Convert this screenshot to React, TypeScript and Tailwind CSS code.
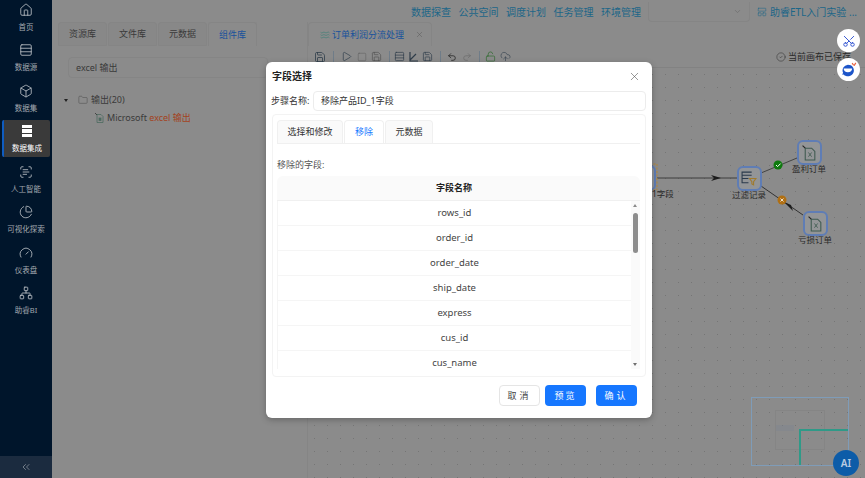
import {
  Box,
  ChartPie,
  ChevronDown,
  ChevronsLeft,
  CircleCheck,
  CloudUpload,
  Folder,
  Gauge,
  House,
  LayoutPanelTop,
  LockOpen,
  Network,
  Play,
  Redo2,
  Rows3,
  Save,
  ScanText,
  Scissors,
  Square,
  Undo2,
  Waves,
  X,
} from "lucide-react";

const FONT = "font-['Noto_Sans','Noto_Sans_CJK_SC',sans-serif]";

const navItems = [
  { label: "首页", icon: House },
  { label: "数据源", icon: Rows3 },
  { label: "数据集", icon: Box },
  { label: "数据集成", icon: null, active: true },
  { label: "人工智能", icon: ScanText },
  { label: "可视化探索", icon: ChartPie },
  { label: "仪表盘", icon: Gauge },
  { label: "助睿BI", icon: Network },
];

const fields = ["rows_id", "order_id", "order_date", "ship_date", "express", "cus_id", "cus_name"];

function Sidebar() {
  return (
    <aside className="flex w-[52px] shrink-0 flex-col bg-[#00152b]">
      <nav className="-mt-[1.5px] flex flex-1 flex-col items-center gap-[3.5px] overflow-hidden">
        {navItems.map((item) => {
          const Icon = item.icon;
          return (
            <div
              key={item.label}
              className={`flex h-[37px] w-[48px] shrink-0 flex-col items-center rounded-[2px] pt-[4px] ${
                item.active ? "border-l-2 border-[#0f5cc0] bg-[#3a3a3a] text-white" : "text-[#a3a9b0]"
              }`}
            >
              {Icon ? (
                <Icon size={14} strokeWidth={1.4} className="text-[#c2c6cb]" />
              ) : (
                <div className="flex h-[14px] w-[10px] flex-col justify-center gap-[1px]">
                  <div className="h-[3.5px] bg-white" />
                  <div className="h-[3.5px] bg-white" />
                  <div className="h-[3.5px] bg-white" />
                </div>
              )}
              <span className="mt-[5px] whitespace-nowrap text-[7.5px] leading-[10px]">{item.label}</span>
            </div>
          );
        })}
      </nav>
      <div className="flex h-[22px] items-center justify-center bg-[#1b2b3f] text-[#a3a9b0]">
        <ChevronsLeft size={12} strokeWidth={1.3} />
      </div>
    </aside>
  );
}

function TopBar() {
  return (
    <header className="flex h-[22px] items-center justify-end pr-[4px] pt-[2px] text-[10px] text-[#1c6688]">
      <div className="flex gap-[7.5px]">
        <span>数据探查</span>
        <span>公共空间</span>
        <span>调度计划</span>
        <span>任务管理</span>
        <span>环境管理</span>
      </div>
      <div className="ml-[7px] flex h-[20px] w-[102px] items-center justify-end rounded-b-[4px] border border-t-0 border-[#858585] pr-[7px] text-[#6f6f6f]">
        <ChevronDown size={9} />
      </div>
      <div className="flex h-[20px] w-[111px] items-center gap-[3px] pl-[7px]">
        <LayoutPanelTop size={10} strokeWidth={1.3} />
        <span className="whitespace-nowrap">助睿ETL入门实验 ...</span>
      </div>
    </header>
  );
}

function LeftPanel() {
  return (
    <section className="flex w-[256px] shrink-0 flex-col border-r border-[#858585] pl-[6px] text-[#3a3a3a]">
      <div className="flex h-[24px] gap-[1px] text-[9px]">
        {["资源库", "文件库", "元数据"].map((t) => (
          <div
            key={t}
            className="flex w-[49px] items-center justify-center rounded-t-[3px] border border-[#858585] bg-[#888888]"
          >
            {t}
          </div>
        ))}
        <div className="flex w-[49px] items-center justify-center rounded-t-[3px] border border-b-0 border-[#858585] text-[#17529c]">
          组件库
        </div>
      </div>
      <div className="ml-[10px] mt-[11px] flex h-[21px] w-[200px] items-center rounded-[4px] border border-[#858585] px-[7px] text-[9px]">
        excel 输出
      </div>
      <div className="ml-[6px] mt-[15px] flex h-[14px] items-center text-[9px]">
        <span className="h-0 w-0 border-x-[2.5px] border-t-[3px] border-x-transparent border-t-[#222222]" />
        <Folder size={10} strokeWidth={1.1} className="ml-[10px] text-[#444444]" />
        <span className="ml-[3px]">输出(20)</span>
      </div>
      <div className="ml-[37px] mt-[4px] flex h-[14px] items-center text-[9px]">
        <svg width="9" height="10" viewBox="0 0 9 10" fill="none" stroke="#4d6b60" strokeWidth="0.8">
          <path d="M2 1.5h4l2 2v6H2z" />
          <rect x="4" y="5" width="2" height="2.5" fill="#4d6b60" />
          <path d="M0 0l2 2" stroke="#333333" />
        </svg>
        <span className="ml-[3px] whitespace-nowrap">
          Microsoft <span className="text-[#a3431d]">excel 输出</span>
        </span>
      </div>
    </section>
  );
}

function Toolbar() {
  const cls = "text-[#2f3d4a]";
  const sep = "h-[11px] w-px bg-[#6f7c88]";
  return (
    <div className="flex h-[22px] items-center border-b border-[#828282] pl-[6px] pr-[14px]">
      <Save size={12} strokeWidth={1.6} className={cls} />
      <span className={`ml-[7px] ${sep}`} />
      <Play size={11} strokeWidth={1.5} className={`ml-[7px] ${cls}`} />
      <Square size={10} strokeWidth={1.2} className="ml-[5px] text-[#5d5d5d]" />
      <Save size={11} strokeWidth={1.3} className="ml-[4px] text-[#4a4a4a]" />
      <span className={`ml-[7px] ${sep}`} />
      <Rows3 size={11} strokeWidth={1.5} className={`ml-[4px] ${cls}`} />
      <svg width="10" height="11" viewBox="0 0 10 11" fill="none" stroke="#2f3d4a" strokeWidth="1.2" className="ml-[4px]">
        <path d="M1 1v9h8M1 9l6-6" />
      </svg>
      <Save size={11} strokeWidth={1.5} className={`ml-[3px] ${cls}`} />
      <span className={`ml-[7px] ${sep}`} />
      <Undo2 size={10} strokeWidth={1.8} className="ml-[6px] text-[#222222]" />
      <Redo2 size={10} strokeWidth={1.4} className="ml-[5px] text-[#666666]" />
      <span className={`ml-[7px] ${sep}`} />
      <LockOpen size={11} strokeWidth={1.5} className="ml-[5px] text-[#2e6b2e]" />
      <CloudUpload size={11} strokeWidth={1.3} className={`ml-[4px] ${cls}`} />
      <div className="ml-auto flex items-center gap-[2px] whitespace-nowrap pt-[1px] text-[9px] text-[#2a2a2a]">
        <CircleCheck size={10} strokeWidth={1.2} />
        当前画布已保存
      </div>
    </div>
  );
}

function FlowNode({ x, y, label, filter }: { x: number; y: number; label: string; filter?: boolean }) {
  return (
    <div className="absolute flex w-[50px] flex-col items-center" style={{ left: x - 13, top: y }}>
      <div className="flex h-[25px] w-[25px] items-center justify-center rounded-[6px] border-2 border-[#5f7db5] bg-[#939597]">
        {filter ? (
          <svg width="16" height="15" viewBox="0 0 15 14" fill="none" stroke="#2b3a4c" strokeWidth="1">
            <path d="M10 1H1v10h6M1 4h9M1 7h6" />
            <path d="M8 7h6l-2.2 3v3l-1.6-1v-2z" stroke="#a07a2c" />
          </svg>
        ) : (
          <svg width="15" height="16" viewBox="0 0 14 15" fill="none" stroke="#3f5a50" strokeWidth="1">
            <path d="M3 3h6l3 3v8H3z" />
            <path d="M0.5 0.5L3 3" stroke="#222222" />
            <path d="M6 7l3 4M9 7l-3 4" strokeWidth="0.8" />
          </svg>
        )}
      </div>
      <span className="mt-[-2px] whitespace-nowrap text-[8.5px] leading-[11px] text-[#2a2a2a]">{label}</span>
    </div>
  );
}

function Canvas() {
  return (
    <section className="flex min-w-0 flex-1 flex-col">
      <div className="flex h-[24px] items-end">
        <div className="flex h-[24px] w-[124px] items-center rounded-t-[4px] border border-b-0 border-[#858585] pl-[11px] text-[9px] text-[#17529c]">
          <Waves size={10} strokeWidth={1.3} className="mr-[2px] text-[#2d7d72]" />
          <span className="whitespace-nowrap">订单利润分流处理</span>
          <X size={9} strokeWidth={1.2} className="ml-[11px] text-[#555555]" />
        </div>
      </div>
      <Toolbar />
      <div className="relative flex-1 bg-[radial-gradient(circle,#757575_0.6px,transparent_0.9px)] bg-[length:13px_13px]">
        {/* 画布坐标 = 页面坐标 - (309, 68) */}
        <svg className="absolute inset-0 h-full w-full" fill="none">
          <path d="M349 110h80" stroke="#333333" strokeWidth="0.9" />
          <path d="M403 107l10 3-10 3 3-3z" fill="#1c1c1c" />
          <path d="M453 105l36-15" stroke="#444444" />
          <path d="M453 118l42 29" stroke="#333333" />
          <path d="M476 134l7 3 2 6z" fill="#1c1c1c" />
          <rect x="335" y="98" width="12" height="24" rx="5" stroke="#5f7db5" strokeWidth="2" fill="#939597" />
          <rect x="335" y="96" width="14" height="26" stroke="#b78735" strokeDasharray="2 1.5" />
          <circle cx="470" cy="97" r="4.5" fill="#0e7a0e" />
          <path d="M468 97l1.6 1.6 3-3" stroke="#ffffff" />
          <circle cx="474" cy="132" r="4.5" fill="#b06f12" />
          <path d="M472.5 130.5l3 3m0-3l-3 3" stroke="#ffffff" strokeWidth="0.8" />
        </svg>
        <span className="absolute left-[344px] top-[120px] whitespace-nowrap text-[8.5px] text-[#2a2a2a]">1字段</span>
        <FlowNode x={429} y={98} label="过滤记录" filter />
        <FlowNode x={489} y={72} label="盈利订单" />
        <FlowNode x={495} y={143} label="亏损订单" />

        {/* minimap */}
        <div className="absolute left-[443px] top-[329px] h-[69px] w-[98px] border border-[#7f9cb8]">
          <div className="absolute left-[23px] top-[12px] h-[40px] w-[50px] border border-[#858585]" />
          <div className="absolute left-[24px] top-[27px] h-[6px] w-[18px] bg-[#7d8490] opacity-40" />
          <div className="absolute left-[47px] bottom-0 top-[31px] w-[2px] bg-[#2f9a88]" />
          <div className="absolute left-[47px] right-0 top-[31px] h-[2px] bg-[#2f9a88]" />
        </div>
        <div className="absolute left-[524px] top-[382px] ml-[1px] flex h-[26px] w-[26px] items-center justify-center rounded-full bg-[#0d5ca8] text-[10px] font-semibold text-[#b9cde2]">
          AI
        </div>
      </div>
    </section>
  );
}

function FieldModal() {
  return (
    <div className="absolute left-[266px] top-[62px] flex h-[356px] w-[386px] flex-col rounded-[6px] bg-white text-[9px] text-[#333333] shadow-[0_2px_6px_rgba(0,0,0,0.25)]">
      <div className="flex h-[29px] items-center justify-between pl-[6px] pr-[11px]">
        <span className="text-[10px] font-semibold text-[#222222]">字段选择</span>
        <X size={13} strokeWidth={1.1} className="text-[#555555]" />
      </div>
      <div className="flex h-[20px] items-center pl-[5px] pr-[6px]">
        <span className="w-[42px] whitespace-nowrap">步骤名称:</span>
        <div className="flex h-[20px] flex-1 items-center rounded-[4px] border border-[#ececec] px-[7px]">
          移除产品ID_1字段
        </div>
      </div>
      <div className="ml-[6px] mr-[6px] mt-[3px] flex h-[263px] flex-col rounded-[4px] border border-[#f3f3f3] pl-[4px] pr-[5px] pt-[5px]">
        <div className="flex h-[24px] gap-[1px] border-b border-[#f0f0f0]">
          <div className="flex w-[66px] items-center justify-center rounded-t-[4px] border border-b-0 border-[#f0f0f0] bg-[#fafafa]">
            选择和修改
          </div>
          <div className="flex w-[40px] items-center justify-center rounded-t-[4px] border border-b-0 border-[#f0f0f0] text-[#1677ff]">
            移除
          </div>
          <div className="flex w-[48px] items-center justify-center rounded-t-[4px] border border-b-0 border-[#f0f0f0] bg-[#fafafa]">
            元数据
          </div>
        </div>
        <div className="mt-[14px] h-[14px] leading-[14px] text-[#555555]">移除的字段:</div>
        <div className="mt-[4px] w-[363px] overflow-hidden">
          <div className="flex h-[25px] items-center justify-center rounded-t-[6px] border-b border-[#f0f0f0] bg-[#fafafa] pr-[9px] font-semibold text-[#222222]">
            字段名称
          </div>
          <div className="flex h-[168px]">
            <div className="min-w-0 flex-1 overflow-hidden border-l border-[#f5f5f5]">
              {fields.map((f) => (
                <div
                  key={f}
                  className="flex h-[25px] shrink-0 items-center justify-center border-b border-[#f5f5f5] text-[9.5px] text-[#444444]"
                >
                  {f}
                </div>
              ))}
            </div>
            <div className="relative w-[9px] shrink-0 bg-[#fafafa]">
              <span className="absolute left-[2px] top-[3px] h-0 w-0 border-x-[2.5px] border-b-[3px] border-x-transparent border-b-[#8a8a8a]" />
              <span className="absolute left-[2px] top-[12px] h-[40px] w-[5px] rounded-full bg-[#8d8d8d]" />
              <span className="absolute bottom-[3px] left-[2px] h-0 w-0 border-x-[2.5px] border-t-[3px] border-x-transparent border-t-[#6f6f6f]" />
            </div>
          </div>
        </div>
      </div>
      <div className="mr-[15px] mt-[8px] flex justify-end">
        <button className="h-[21px] w-[41px] rounded-[4px] border border-[#e5e5e5] text-[9px] tracking-[3px] text-[#444444]">
          取消
        </button>
        <button className="ml-[5px] h-[21px] w-[41px] rounded-[4px] bg-[#1677ff] text-[9px] tracking-[2px] text-white">
          预览
        </button>
        <button className="ml-[10px] h-[21px] w-[41px] rounded-[4px] bg-[#1677ff] text-[9px] tracking-[3px] text-white">
          确认
        </button>
      </div>
    </div>
  );
}

export default function App() {
  return (
    <div className={`${FONT} relative flex h-[478px] w-[865px] overflow-hidden bg-[#8b8b8b]`}>
      <Sidebar />
      <main className="flex min-w-0 flex-1 flex-col">
        <TopBar />
        <div className="flex min-h-0 flex-1">
          <LeftPanel />
          <Canvas />
        </div>
      </main>
      <FieldModal />
      <div className="absolute left-[837px] top-[29px] flex h-[23px] w-[23px] items-center justify-center rounded-full bg-white text-[#2b4fd0]">
        <Scissors size={14} strokeWidth={1.6} className="-rotate-90" />
      </div>
      <div className="absolute left-[837px] top-[58px] flex h-[23px] w-[23px] items-center justify-center rounded-full bg-white">
        <svg width="17" height="17" viewBox="0 0 14 14">
          <path d="M6.5 3a5 4.8 0 1 1-3.6 8.2H1.6l1-1.4A5 4.8 0 0 1 6.5 3z" fill="#1d55c9" />
          <path d="M3 6.2h7c0 2-1.4 3-3.5 3S3 8.200 3 6.200z" fill="#ffffff" />
          <path d="M10 1.8l1.2 1.7M13 1.5l-1.4 2.400" stroke="#e8603c" strokeWidth="1" />
        </svg>
      </div>
    </div>
  );
}
